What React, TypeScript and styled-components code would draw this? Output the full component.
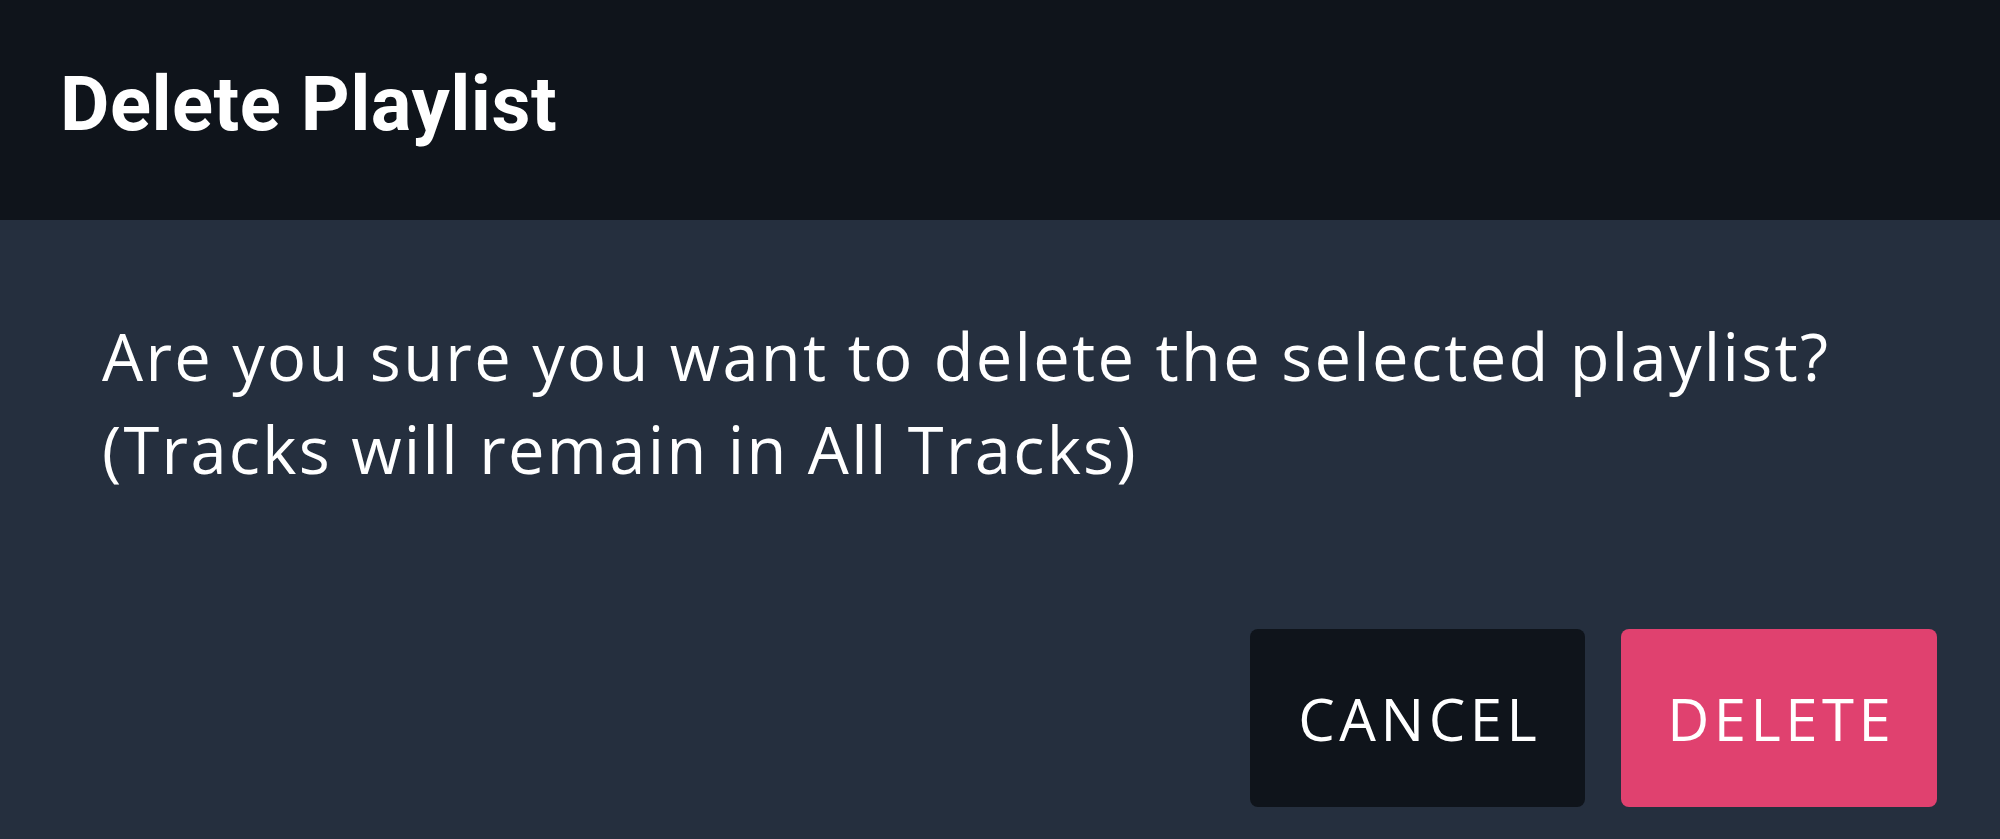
import styled, { createGlobalStyle } from "styled-components";

const GlobalStyle = createGlobalStyle`
  html, body {
    margin: 0;
    padding: 0;
    background: #252f3e;
  }
`;

const Dialog = styled.div`
  display: flex;
  flex-direction: column;
  width: 100vw;
  height: 100vh;
  background: #252f3e;
  color: #ffffff;
  overflow: hidden;
`;

const Header = styled.div`
  height: 220px;
  flex-shrink: 0;
  display: flex;
  align-items: center;
  padding: 0 60px 12px;
  box-sizing: border-box;
  background: #0f141b;
`;

const Title = styled.h2`
  margin: 0;
  font-family: Roboto, "Liberation Sans", sans-serif;
  font-weight: 700;
  font-size: 76px;
  letter-spacing: 0.5px;
`;

const Content = styled.div`
  flex: 1;
  padding: 90px 102px 0;
`;

const Message = styled.p`
  margin: 0;
  font-family: "Open Sans", sans-serif;
  font-size: 65px;
  line-height: 93px;
  letter-spacing: 2.3px;
`;

const Actions = styled.div`
  display: flex;
  justify-content: flex-end;
  gap: 36px;
  padding: 0 63px 32px;
`;

const Button = styled.button<{ $danger?: boolean }>`
  height: 178px;
  min-width: ${({ $danger }) => ($danger ? "316px" : "335px")};
  padding: 0;
  border: none;
  border-radius: 8px;
  background: ${({ $danger }) => ($danger ? "#e0416f" : "#0f141b")};
  color: #ffffff;
  font-family: "Open Sans", sans-serif;
  font-size: 58px;
  letter-spacing: 4.5px;
  text-indent: 4.5px;
  cursor: pointer;
`;

export default function App() {
  return (
    <>
      <GlobalStyle />
      <Dialog>
        <Header>
          <Title>Delete Playlist</Title>
        </Header>
        <Content>
          <Message>
            Are you sure you want to delete the selected playlist?
            <br />
            (Tracks will remain in All Tracks)
          </Message>
        </Content>
        <Actions>
          <Button>CANCEL</Button>
          <Button $danger>DELETE</Button>
        </Actions>
      </Dialog>
    </>
  );
}
